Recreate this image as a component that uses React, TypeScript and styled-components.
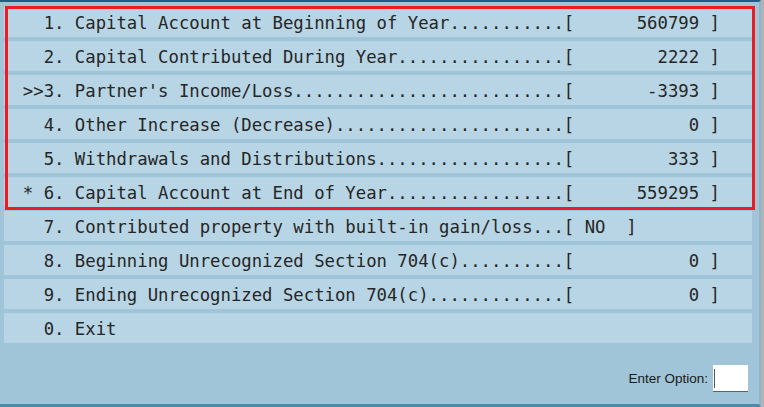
import React from "react";
import styled, { createGlobalStyle } from "styled-components";

const colors = {
  screen: "#a0c4d8",
  row: "#b7d5e4",
  topBar: "#1f5c83",
  bottomBar: "#4a8aab",
  edge: "#b3b3b3",
  edgeLine: "#8db6cc",
  text: "#262626",
  red: "#ed1c24",
};

type Item = {
  marker?: string;
  label: string;
  value?: string;
  flag?: boolean;
};

const boxed: Item[] = [
  { label: "1. Capital Account at Beginning of Year", value: "560799" },
  { label: "2. Capital Contributed During Year", value: "2222" },
  { marker: ">>", label: "3. Partner's Income/Loss", value: "-3393" },
  { label: "4. Other Increase (Decrease)", value: "0" },
  { label: "5. Withdrawals and Distributions", value: "333" },
  { marker: "* ", label: "6. Capital Account at End of Year", value: "559295" },
];

const rest: Item[] = [
  { label: "7. Contributed property with built-in gain/loss", value: "NO", flag: true },
  { label: "8. Beginning Unrecognized Section 704(c)", value: "0" },
  { label: "9. Ending Unrecognized Section 704(c)", value: "0" },
  { label: "0. Exit" },
];

function MenuRow({ item }: { item: Item }) {
  const marker = "  " + (item.marker ?? "  ");
  const hasField = item.value !== undefined;
  const label = hasField ? item.label.padEnd(50, ".") : item.label;
  const field = item.flag
    ? "[ " + item.value + "  ]"
    : "[" + (item.value ?? "").padStart(12) + " ]";
  return (
    <Row>
      <Marker>{marker}</Marker>
      <Label>{label}</Label>
      {hasField && <Field>{field}</Field>}
    </Row>
  );
}

export default function App() {
  return (
    <>
      <GlobalStyle />
      <Frame>
        <Screen>
          <Menu>
            <Selected>
              {boxed.map((item) => (
                <MenuRow key={item.label} item={item} />
              ))}
            </Selected>
            {rest.map((item) => (
              <MenuRow key={item.label} item={item} />
            ))}
          </Menu>
          <Prompt>
            <PromptLabel>Enter Option:</PromptLabel>
            <OptionBox>
              <Caret />
            </OptionBox>
          </Prompt>
        </Screen>
        <Edge />
      </Frame>
    </>
  );
}

const GlobalStyle = createGlobalStyle`
  html, body {
    margin: 0;
    padding: 0;
  }
  body {
    background: ${colors.screen};
  }
`;

const Frame = styled.div`
  display: flex;
  width: 764px;
  height: 407px;
  overflow: hidden;
`;

const Screen = styled.div`
  flex: 1;
  display: flex;
  flex-direction: column;
  background: ${colors.screen};
  border-top: 2px solid ${colors.topBar};
  border-bottom: 3px solid ${colors.bottomBar};
  border-right: 2px solid ${colors.edgeLine};
  padding: 5px 7px 0 4px;
`;

const Edge = styled.div`
  width: 3px;
  background: ${colors.edge};
`;

const Menu = styled.div`
  display: flex;
  flex-direction: column;
  gap: 4px;
`;

const Selected = styled.div`
  position: relative;
  display: flex;
  flex-direction: column;
  gap: 4px;

  &::after {
    content: "";
    position: absolute;
    left: 1px;
    right: -3px;
    top: -1px;
    bottom: -3px;
    border: 3px solid ${colors.red};
    pointer-events: none;
  }
`;

const Row = styled.div`
  display: flex;
  height: 30px;
  box-sizing: border-box;
  padding-top: 3px;
  background: ${colors.row};
  font-family: "DejaVu Sans Mono", "Liberation Mono", monospace;
  font-size: 17.3px;
  line-height: 27px;
  color: ${colors.text};
  white-space: pre;
`;

const Marker = styled.span`
  margin-left: -2px;
`;

const Label = styled.span``;

const Field = styled.span``;

const Prompt = styled.div`
  margin-top: auto;
  display: flex;
  justify-content: flex-end;
  align-items: center;
  gap: 5px;
  padding: 0 4px 12px 0;
`;

const PromptLabel = styled.span`
  font-family: "Liberation Sans", Arial, sans-serif;
  font-size: 13.5px;
  color: #1a1a1a;
`;

const OptionBox = styled.div`
  position: relative;
  width: 35px;
  height: 27px;
  box-sizing: border-box;
  background: #ffffff;
  border-bottom: 1px solid #5a6470;
`;

const Caret = styled.span`
  position: absolute;
  left: 1px;
  top: 4px;
  width: 1px;
  height: 19px;
  background: #555555;
`;
